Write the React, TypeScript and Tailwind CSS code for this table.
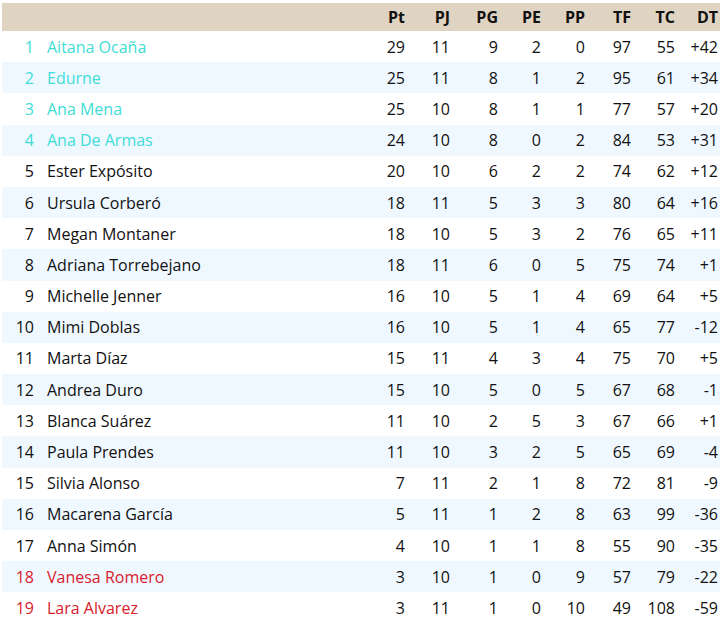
import React from "react";

type Row = [number, string, number, number, number, number, number, number, number, string];

const rows: Row[] = [
  [1, "Aitana Ocaña", 29, 11, 9, 2, 0, 97, 55, "+42"],
  [2, "Edurne", 25, 11, 8, 1, 2, 95, 61, "+34"],
  [3, "Ana Mena", 25, 10, 8, 1, 1, 77, 57, "+20"],
  [4, "Ana De Armas", 24, 10, 8, 0, 2, 84, 53, "+31"],
  [5, "Ester Expósito", 20, 10, 6, 2, 2, 74, 62, "+12"],
  [6, "Ursula Corberó", 18, 11, 5, 3, 3, 80, 64, "+16"],
  [7, "Megan Montaner", 18, 10, 5, 3, 2, 76, 65, "+11"],
  [8, "Adriana Torrebejano", 18, 11, 6, 0, 5, 75, 74, "+1"],
  [9, "Michelle Jenner", 16, 10, 5, 1, 4, 69, 64, "+5"],
  [10, "Mimi Doblas", 16, 10, 5, 1, 4, 65, 77, "-12"],
  [11, "Marta Díaz", 15, 11, 4, 3, 4, 75, 70, "+5"],
  [12, "Andrea Duro", 15, 10, 5, 0, 5, 67, 68, "-1"],
  [13, "Blanca Suárez", 11, 10, 2, 5, 3, 67, 66, "+1"],
  [14, "Paula Prendes", 11, 10, 3, 2, 5, 65, 69, "-4"],
  [15, "Silvia Alonso", 7, 11, 2, 1, 8, 72, 81, "-9"],
  [16, "Macarena García", 5, 11, 1, 2, 8, 63, 99, "-36"],
  [17, "Anna Simón", 4, 10, 1, 1, 8, 55, 90, "-35"],
  [18, "Vanesa Romero", 3, 10, 1, 0, 9, 57, 79, "-22"],
  [19, "Lara Alvarez", 3, 11, 1, 0, 10, 49, 108, "-59"],
];

const grid = "grid grid-cols-[34px_329px_42px_45px_48px_43px_44px_46px_44px_43px]";
const headers = ["Pt", "PJ", "PG", "PE", "PP", "TF", "TC", "DT"];

export default function App() {
  return (
    <div className="bg-white w-[727px] h-[628px] pt-[3px] pl-[2px]" style={{ fontFamily: '"Open Sans", "Noto Sans", sans-serif' }}>
      <div className="w-[718px] text-[16px] text-[#111111]">
        <div className={`${grid} h-[28px] items-center bg-[#dfd3c2] font-bold`}>
          <div />
          <div />
          {headers.map((h) => (
            <div key={h} className="text-right pr-[2px]">{h}</div>
          ))}
        </div>
        {rows.map((r, i) => {
          const color = r[0] <= 4 ? "text-[#40ddd6]" : r[0] >= 18 ? "text-[#d8202c]" : "";
          const bg = i % 2 === 1 ? "bg-[#f0f8ff]" : "bg-white";
          return (
            <div key={r[0]} className={`${grid} h-[31.2px] items-center ${bg}`}>
              <div className={`text-right pr-[2px] ${color}`}>{r[0]}</div>
              <div className={`pl-[11px] ${color}`}>{r[1]}</div>
              {r.slice(2).map((v, j) => (
                <div key={j} className="text-right pr-[2px]">{v}</div>
              ))}
            </div>
          );
        })}
      </div>
    </div>
  );
}
